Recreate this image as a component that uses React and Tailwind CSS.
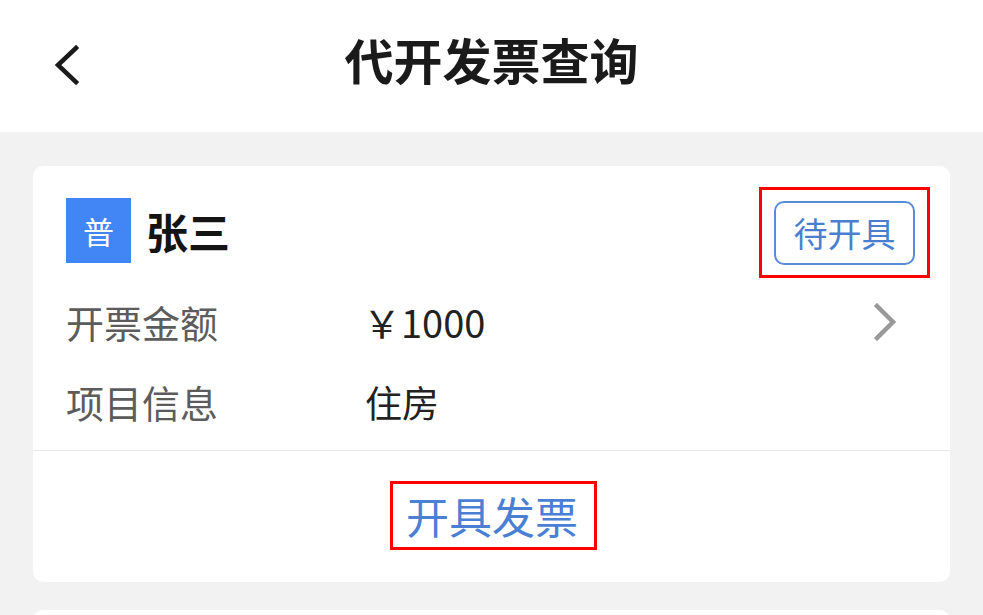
export default function App() {
  const font = { fontFamily: '"Noto Sans CJK SC", "Noto Sans", sans-serif' };
  return (
    <div className="w-[983px] h-[615px] overflow-hidden bg-[#f2f2f2]" style={font}>
      <div className="h-[132px] bg-white flex items-center relative">
        <div className="absolute left-[52px] top-[44px]">
          <svg width="30" height="42" viewBox="0 0 30 42" fill="none">
            <path d="M24 4 L6 21 L24 38" stroke="#1a1a1a" strokeWidth="4.5" strokeLinecap="square" strokeLinejoin="miter" />
          </svg>
        </div>
        <div className="w-full text-center text-[49px] font-bold text-[#1a1a1a] leading-none -mt-[16px]">代开发票查询</div>
      </div>

      <div className="mx-[33px] mt-[34px] bg-white rounded-[10px]">
        <div className="px-[33px] pt-[32px] pb-[8px]">
          <div className="h-[65px] flex items-center">
            <div className="w-[65px] h-[65px] bg-[#4286f5] flex items-center justify-center text-white text-[31px] leading-none">普</div>
            <div className="ml-[15px] text-[42px] font-bold text-[#141414] leading-none">张三</div>
            <div className="ml-auto -mr-[13px] -mt-[11px] -mb-[15px] border-[3px] border-[#ff0000] px-[12px] pt-[11px] pb-[10px]">
              <div className="w-[141px] h-[64px] border-2 border-[#5a8bd6] rounded-[10px] flex items-center justify-center text-[34px] text-[#4a7fd0] leading-none">待开具</div>
            </div>
          </div>
          <div className="mt-[19px] h-[80px] flex items-center">
            <div className="w-[297px] text-[38px] text-[#5c5c5c] leading-none">开票金额</div>
            <div className="text-[38px] text-[#222] leading-none">￥1000</div>
            <div className="ml-auto mr-[18px]">
              <svg width="26" height="38" viewBox="0 0 26 38" fill="none">
                <path d="M4 3 L20 19 L4 35" stroke="#999999" strokeWidth="4.5" strokeLinecap="square" />
              </svg>
            </div>
          </div>
          <div className="h-[80px] flex items-center">
            <div className="w-[299px] text-[38px] text-[#5c5c5c] leading-none">项目信息</div>
            <div className="text-[37px] text-[#222] leading-none">住房</div>
          </div>
        </div>
        <div className="h-px bg-[#e8e8e8]" />
        <div className="h-[131px] flex items-center justify-center">
          <div className="ml-[4px] -mt-[2px] border-[3px] border-[#ff0000] w-[207px] h-[69px] flex items-center justify-center">
            <span className="text-[43px] text-[#4a7fd6] leading-none -ml-[3px]">开具发票</span>
          </div>
        </div>
      </div>

      <div className="mx-[33px] mt-[28px] h-[40px] bg-white rounded-[10px]" />
    </div>
  );
}
